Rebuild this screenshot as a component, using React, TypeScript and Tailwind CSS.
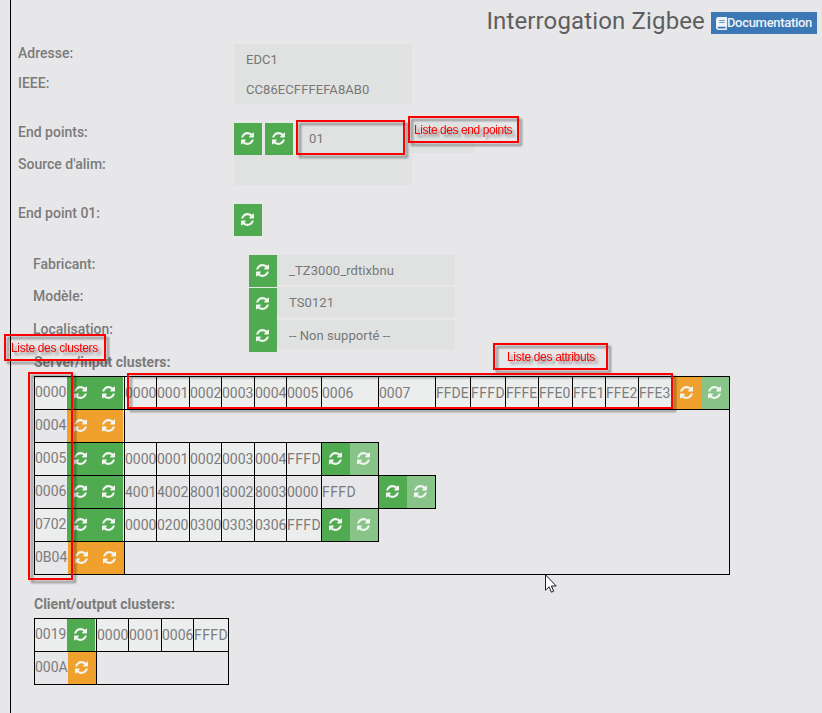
import type { ReactNode } from "react";
import { FaBook } from "react-icons/fa";

type Tone = "green" | "orange" | "pale";

const tones: Record<Tone, string> = {
  green: "bg-[#50aa50]",
  orange: "bg-[#f0a02c]",
  pale: "bg-[#88c388]",
};

function RefreshIcon() {
  return (
    <svg viewBox="0 0 1536 1536" className="mr-px h-[13px] w-[13px]" fill="currentColor">
      <path d="M1511 928q0 5-1 7-64 268-268 434.5t-478 166.5q-146 0-282.5-55t-243.5-157l-129 129q-19 19-45 19t-45-19-19-45v-448q0-26 19-45t45-19h448q26 0 45 19t19 45-19 45l-137 137q71 66 161 102t187 36q134 0 250-65t186-179q11-17 53-117 8-23 30-23h192q13 0 22.5 9.5t9.5 22.5zm25-800v448q0 26-19 45t-45 19h-448q-26 0-45-19t-19-45 19-45l138-138q-148-137-349-137-134 0-250 65t-186 179q-11 17-53 117-8 23-30 23h-199q-13 0-22.5-9.5t-9.5-22.5v-7q65-268 270-434.5t480-166.5q146 0 284 55.5t245 156.5l130-129q19-19 45-19t45 19 19 45z" />
    </svg>
  );
}

function Refresh({ tone = "green" }: { tone?: Tone }) {
  return (
    <button className={`flex h-8 w-7 shrink-0 items-start justify-center pt-[9px] text-[#f1f5f1] ${tones[tone]}`}>
      <RefreshIcon />
    </button>
  );
}

function Field({ children, className = "" }: { children?: ReactNode; className?: string }) {
  return (
    <div className={`flex h-[30px] w-[178px] shrink-0 items-center bg-[#dfe2e1] pl-3 pt-0.5 text-[13px] tracking-[0.08px] text-[#777] ${className}`}>
      {children}
    </div>
  );
}

function Label({ children, className = "" }: { children: ReactNode; className?: string }) {
  return <div className={`w-[216px] shrink-0 text-[14px] leading-[18px] font-medium text-[#7b7b7b] ${className}`}>{children}</div>;
}

const widths: Record<string, string> = {
  a: "w-[33px]",
  b: "w-[34px]",
  c: "w-[36px]",
  d: "w-[35px]",
  w: "w-[58px]",
};

type Cluster = {
  id: string;
  tones: Tone[];
  cells?: [string, string][];
  end?: Tone[];
};

const inputClusters: Cluster[] = [
  {
    id: "0000",
    tones: ["green", "green"],
    cells: [
      ["0000", "a"], ["0001", "b"], ["0002", "a"], ["0003", "b"], ["0004", "a"], ["0005", "c"],
      ["0006", "w"], ["0007", "w"], ["FFDE", "c"], ["FFFD", "c"], ["FFFE", "b"], ["FFE0", "d"],
      ["FFE1", "b"], ["FFE2", "b"], ["FFE3", "d"],
    ],
    end: ["orange", "pale"],
  },
  { id: "0004", tones: ["orange", "orange"] },
  {
    id: "0005",
    tones: ["green", "green"],
    cells: [["0000", "a"], ["0001", "b"], ["0002", "a"], ["0003", "b"], ["0004", "a"], ["FFFD", "c"]],
    end: ["green", "pale"],
  },
  {
    id: "0006",
    tones: ["green", "green"],
    cells: [["4001", "a"], ["4002", "b"], ["8001", "a"], ["8002", "b"], ["8003", "a"], ["0000", "c"], ["FFFD", "w"]],
    end: ["green", "pale"],
  },
  {
    id: "0702",
    tones: ["green", "green"],
    cells: [["0000", "a"], ["0200", "b"], ["0300", "a"], ["0303", "b"], ["0306", "a"], ["FFFD", "c"]],
    end: ["green", "pale"],
  },
  { id: "0B04", tones: ["orange", "orange"] },
];

const outputClusters: Cluster[] = [
  { id: "0019", tones: ["green"], cells: [["0000", "a"], ["0001", "b"], ["0006", "a"], ["FFFD", "c"]] },
  { id: "000A", tones: ["orange"] },
];

function ClusterTable({ rows, className, head }: { rows: Cluster[]; className: string; head: string }) {
  return (
    <div className={`flex flex-col border border-black text-[14px] text-[#7c7c7c] ${className}`}>
      {rows.map((row, i) => {
        const fill = i % 2 === 0 ? "bg-[#eceeed]" : "";
        const wideId = /[A-F]/.test(row.id);
        return (
          <div key={row.id} className="-mx-px -mt-px flex h-[34px] last:-mb-px">
            <div className={`flex shrink-0 border border-black ${head} ${fill}`}>
              <span className={`shrink-0 leading-[31px] ${wideId ? "w-[33px]" : "w-8"}`}>{row.id}</span>
              {row.tones.map((tone, k) => (
                <Refresh key={k} tone={tone} />
              ))}
            </div>
            {row.cells?.map(([text, w]) => (
              <div
                key={text}
                className={`-ml-px shrink-0 overflow-visible border border-black leading-[33px] ${widths[w]} ${fill} ${text.startsWith("FFFD") ? "tracking-[0.4px]" : ""}`}
              >
                {text}
              </div>
            ))}
            {row.end && (
              <div className="-ml-px flex w-[58px] shrink-0 border border-black">
                {row.end.map((tone, k) => (
                  <Refresh key={k} tone={tone} />
                ))}
              </div>
            )}
          </div>
        );
      })}
    </div>
  );
}

function Callout({ className, text, textClass = "" }: { className: string; text?: string; textClass?: string }) {
  return (
    <div
      className={`absolute border-2 border-[#fb0000] font-['Liberation_Sans',Arial,sans-serif] text-[12px] whitespace-nowrap text-[#fb0000] drop-shadow-[3px_3px_1px_rgba(0,0,0,0.4)] ${className}`}
    >
      {text && <span className={`block ${textClass}`}>{text}</span>}
    </div>
  );
}

export default function App() {
  return (
    <div className="relative h-[713px] w-[822px] overflow-hidden bg-[#e7e7e9] pl-2.5 font-[Roboto,sans-serif]">
      <main className="h-full border-l border-black pl-[7px]">
        <header className="flex h-11 justify-end pr-[5px]">
          <h1 className="mr-1.5 text-[24px] leading-[42px] tracking-[0.14px] text-[#5e5e5e]">Interrogation Zigbee</h1>
          <button className="mt-3 flex h-[22px] w-[106px] items-center justify-center bg-[#3c78b5] text-[13px] font-medium tracking-[-0.3px] text-[#eef3f7]">
            <FaBook className="h-[13px] w-[11px]" preserveAspectRatio="none" />
            Documentation
          </button>
        </header>

        <section>
          <div className="flex h-[30px]"><Label>Adresse:</Label><Field>EDC1</Field></div>
          <div className="flex h-[30px]"><Label>IEEE:</Label><Field>CC86ECFFFEFA8AB0</Field></div>
        </section>

        <section className="mt-[19px]">
          <div className="flex h-8">
            <Label>End points:</Label>
            <div className="flex gap-[3px]">
              <Refresh />
              <Refresh />
              <Field className="w-[179px] pl-[13px]">01</Field>
            </div>
          </div>
          <div className="flex h-[30px]"><Label>Source d'alim:</Label><Field /></div>
        </section>

        <section className="mt-[19px] flex h-8"><Label>End point 01:</Label><Refresh /></section>

        <section className="mt-[19px] pl-[15px]">
          <div className="flex h-[33px]"><Label>Fabricant:</Label><Refresh /><Field>_TZ3000_rdtixbnu</Field></div>
          <div className="flex h-8"><Label className="-mt-px">Modèle:</Label><Refresh /><Field className="-mt-px">TS0121</Field></div>
          <div className="flex h-8"><Label>Localisation:</Label><Refresh /><Field>-- Non supporté --</Field></div>
        </section>

        <section className="pl-4">
          <h2 className="h-6 text-[14px] leading-[20px] font-bold text-[#7b7b7b]">Server/input clusters:</h2>
          <ClusterTable rows={inputClusters} head="w-[91px]" className="h-[199px] w-[696px]" />
          <h2 className="mt-[19px] h-6 text-[14px] leading-[20px] font-bold text-[#7b7b7b]">Client/output clusters:</h2>
          <ClusterTable rows={outputClusters} head="w-[63px]" className="h-[67px] w-[195px]" />
        </section>
      </main>

      <Callout className="top-[120px] left-[296px] h-[35px] w-[109px]" />
      <Callout className="top-[116px] left-[408px] h-[27px] w-[111px]" text="Liste des end points" textClass="pl-1 leading-6 tracking-[-0.43px]" />
      <Callout className="top-[334px] left-[4px] h-[27px] w-[102px]" text="Liste des clusters" textClass="pl-[5px] leading-6 tracking-[-0.32px]" />
      <Callout className="top-[343px] left-[493px] h-[27px] w-[115px]" text="Liste des attributs" textClass="pl-3 leading-6 tracking-[-0.32px]" />
      <Callout className="top-[372px] left-[28px] h-[208px] w-[45px]" />
      <Callout className="top-[373px] left-[127px] h-[36px] w-[546px]" />

      <svg className="absolute top-[574px] left-[545px] h-[19px] w-[12px]" viewBox="0 0 12 19">
        <path d="M.5 .8v15.4l3.6-3.4 2.3 5.4 2.3-1-2.3-5.2h4.8z" fill="white" stroke="#1b1b25" />
      </svg>
    </div>
  );
}
